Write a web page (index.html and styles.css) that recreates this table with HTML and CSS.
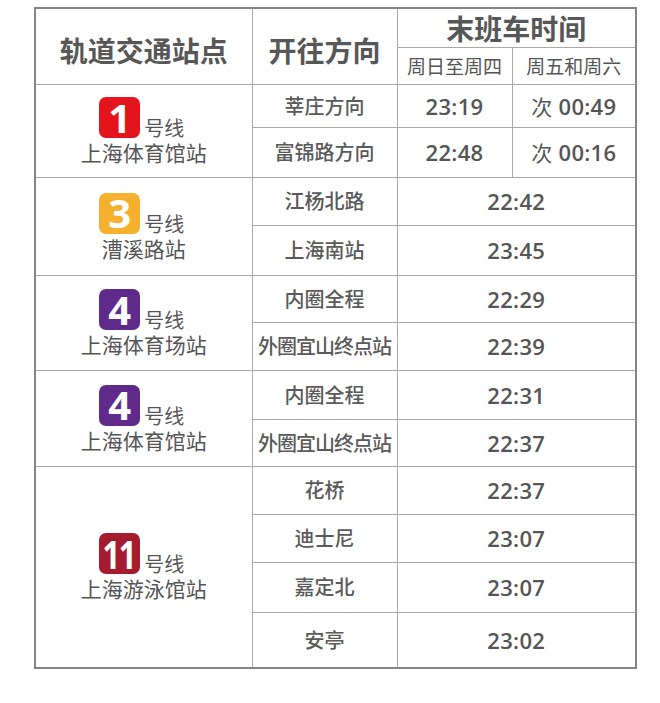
FILE: index.html
```html
<!DOCTYPE html>
<html lang="zh-CN">
<head>
<meta charset="utf-8">
<link rel="stylesheet" href="styles.css">
</head>
<body>
<table class="schedule">
  <colgroup>
    <col class="c-station">
    <col class="c-dir">
    <col class="c-wk">
    <col class="c-we">
  </colgroup>
  <thead>
    <tr class="h1">
      <th rowspan="2" class="big low">轨道交通站点</th>
      <th rowspan="2" class="big low">开往方向</th>
      <th colspan="2" class="big">末班车时间</th>
    </tr>
    <tr class="h2">
      <th class="sub">周日至周四</th>
      <th class="sub">周五和周六</th>
    </tr>
  </thead>
  <tbody>
    <tr class="r43">
      <td rowspan="2" class="station">
        <div class="line"><span class="badge b1">1</span><span class="hx">号线</span></div>
        <div class="sname">上海体育馆站</div>
      </td>
      <td class="dir">莘庄方向</td>
      <td class="time">23:19</td>
      <td class="time"><span class="ci">次</span> 00:49</td>
    </tr>
    <tr class="r50">
      <td class="dir">富锦路方向</td>
      <td class="time">22:48</td>
      <td class="time"><span class="ci">次</span> 00:16</td>
    </tr>

    <tr class="r48">
      <td rowspan="2" class="station">
        <div class="line"><span class="badge b3">3</span><span class="hx">号线</span></div>
        <div class="sname">漕溪路站</div>
      </td>
      <td class="dir">江杨北路</td>
      <td class="time" colspan="2">22:42</td>
    </tr>
    <tr class="r50">
      <td class="dir">上海南站</td>
      <td class="time" colspan="2">23:45</td>
    </tr>

    <tr class="r47">
      <td rowspan="2" class="station">
        <div class="line"><span class="badge b4">4</span><span class="hx">号线</span></div>
        <div class="sname">上海体育场站</div>
      </td>
      <td class="dir">内圈全程</td>
      <td class="time" colspan="2">22:29</td>
    </tr>
    <tr class="r48">
      <td class="dir tight">外圈宜山终点站</td>
      <td class="time" colspan="2">22:39</td>
    </tr>

    <tr class="r49">
      <td rowspan="2" class="station">
        <div class="line"><span class="badge b4">4</span><span class="hx">号线</span></div>
        <div class="sname">上海体育馆站</div>
      </td>
      <td class="dir">内圈全程</td>
      <td class="time" colspan="2">22:31</td>
    </tr>
    <tr class="r47">
      <td class="dir tight">外圈宜山终点站</td>
      <td class="time" colspan="2">22:37</td>
    </tr>

    <tr class="r48">
      <td rowspan="4" class="station">
        <div class="line"><span class="badge b11"><span class="n11">11</span></span><span class="hx">号线</span></div>
        <div class="sname">上海游泳馆站</div>
      </td>
      <td class="dir">花桥</td>
      <td class="time" colspan="2">22:37</td>
    </tr>
    <tr class="r48">
      <td class="dir">迪士尼</td>
      <td class="time" colspan="2">23:07</td>
    </tr>
    <tr class="r50">
      <td class="dir">嘉定北</td>
      <td class="time" colspan="2">23:07</td>
    </tr>
    <tr class="r56">
      <td class="dir">安亭</td>
      <td class="time" colspan="2">23:02</td>
    </tr>
  </tbody>
</table>
</body>
</html>
```

FILE: styles.css
```css
html, body {
  margin: 0;
  padding: 0;
  background: #ffffff;
}

body {
  padding: 7px 0 0 34px;
  font-family: "Noto Sans CJK SC", "Noto Sans", sans-serif;
  color: #555555;
}

.schedule {
  border-collapse: collapse;
  table-layout: fixed;
  width: 601px;
  border: 2px solid #858585;
}

.c-station { width: 217px; }
.c-dir { width: 145px; }
.c-wk { width: 115px; }
.c-we { width: 124px; }

.schedule th,
.schedule td {
  border: 1px solid #a9a9a9;
  padding: 0;
  text-align: center;
  vertical-align: middle;
}

.h1 { height: 39px; }
.h2 { height: 37px; }
.r43 { height: 43px; }
.r47 { height: 47px; }
.r48 { height: 48px; }
.r49 { height: 49px; }
.r50 { height: 50px; }
.r56 { height: 56px; }

.big {
  font-size: 28px;
  font-weight: 700;
  color: #575757;
  line-height: 30px;
}

.big.low {
  padding-top: 8px;
}

.sub {
  font-size: 19px;
  font-weight: 400;
  color: #555555;
  line-height: 24px;
}

.dir {
  font-size: 20px;
  font-weight: 500;
  line-height: 24px;
  color: #5a5a5a;
  white-space: nowrap;
}

.dir.tight {
  letter-spacing: -1px;
}

.time {
  font-family: "Open Sans", "Noto Sans CJK SC", sans-serif;
  font-size: 22px;
  font-weight: 600;
  letter-spacing: 0.3px;
  color: #555555;
  line-height: 26px;
}

.ci {
  font-family: "Noto Sans CJK SC", sans-serif;
  font-weight: 400;
  font-size: 21px;
}

.station {
  color: #555555;
}

.line {
  display: flex;
  justify-content: center;
  align-items: flex-end;
  gap: 4px;
  padding-right: 4px;
}

.badge {
  width: 41px;
  height: 41px;
  border-radius: 7px;
  display: flex;
  align-items: center;
  justify-content: center;
  color: #ffffff;
  font-family: "Open Sans", "Liberation Sans", sans-serif;
  font-weight: 700;
  font-size: 40px;
  line-height: 1;
}

.b1 { background: #e3141c; }
.b3 { background: #f5b02e; }
.b4 { background: #5f2a8a; }
.b11 { background: #a61c2f; }

.n11 {
  display: inline-block;
  letter-spacing: -2px;
  transform: scaleX(0.78);
  margin-left: -2px;
}

.hx {
  font-size: 20px;
  line-height: 20px;
}

.sname {
  font-size: 21px;
  line-height: 24px;
  margin-top: 2px;
}
```
